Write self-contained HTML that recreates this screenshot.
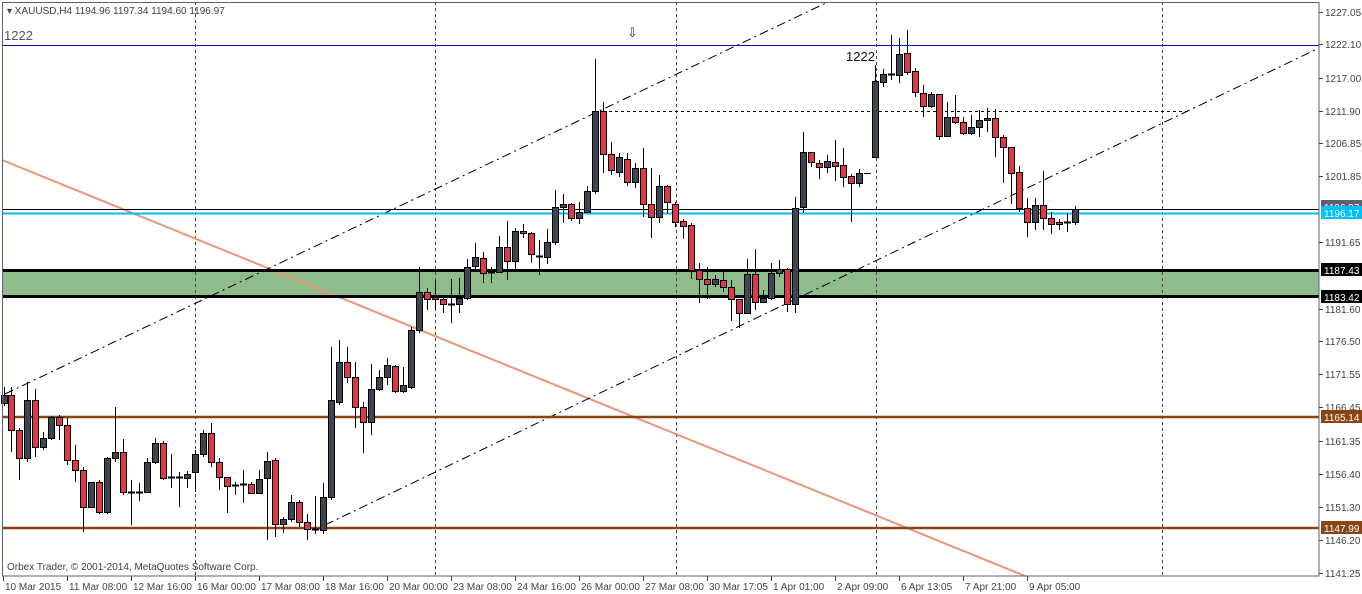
<!DOCTYPE html>
<html><head><meta charset="utf-8"><style>
html,body{margin:0;padding:0;background:#fff;}
body{width:1362px;height:594px;overflow:hidden;position:relative;font-family:"Liberation Sans",sans-serif;}
svg{position:absolute;left:0;top:0;}
</style></head><body>
<svg id="c" width="1362" height="594" xmlns="http://www.w3.org/2000/svg" font-family="Liberation Sans, sans-serif">
<rect x="0" y="0" width="1362" height="594" fill="#fff"/>
<rect x="2" y="270" width="1317" height="27" fill="#8fbc8b"/>
<g stroke="#444" stroke-width="1" stroke-dasharray="3,3">
<line x1="195.5" y1="2" x2="195.5" y2="576"/>
<line x1="435.5" y1="2" x2="435.5" y2="576"/>
<line x1="676.5" y1="2" x2="676.5" y2="576"/>
<line x1="876.5" y1="2" x2="876.5" y2="576"/>
<line x1="1162.5" y1="2" x2="1162.5" y2="576"/>
</g>
<line x1="2" y1="160" x2="1025" y2="576" stroke="#e9967a" stroke-width="2"/>
<g stroke="#000" stroke-width="1" stroke-dasharray="9,4,2,4">
<line x1="5" y1="394" x2="828" y2="2"/>
<line x1="325" y1="525" x2="1319" y2="48"/>
</g>
<line x1="603" y1="111.5" x2="1190" y2="111.5" stroke="#000" stroke-dasharray="3,3"/>
<line x1="2" y1="45.5" x2="1319" y2="45.5" stroke="#0000c8" stroke-width="1"/>
<line x1="2" y1="209.5" x2="1319" y2="209.5" stroke="#000" stroke-width="1"/>
<line x1="2" y1="213.5" x2="1319" y2="213.5" stroke="#00bfff" stroke-width="2"/>
<line x1="2" y1="270.5" x2="1319" y2="270.5" stroke="#000" stroke-width="3"/>
<line x1="2" y1="296.5" x2="1319" y2="296.5" stroke="#000" stroke-width="3"/>
<line x1="2" y1="417" x2="1319" y2="417" stroke="#8b4513" stroke-width="2.5"/>
<line x1="2" y1="528" x2="1319" y2="528" stroke="#8b4513" stroke-width="2.5"/>
<g id="candles"></g>
<text x="7" y="14" font-size="10" fill="#3a3f4a">▾ XAUUSD,H4  1194.96 1197.34 1194.60 1196.97</text>
<text x="4" y="40" font-size="13" fill="#555">1222</text>
<text x="846" y="61" font-size="13" fill="#111">1222</text>
<text x="627" y="37" font-size="13" fill="#333">⇩</text>
<text x="7" y="570" font-size="10" fill="#3a3f4a">Orbex Trader, © 2001-2014, MetaQuotes Software Corp.</text>
<rect x="2.5" y="2.5" width="1316.5" height="573.5" fill="none" stroke="#5a6270" stroke-width="1"/>
<g id="axis" font-size="10" fill="#3d4450"></g>
</svg>
<script>
var d="4,395,403,387,406,0;11,395,430,387,452,1;19,430,458,428,480,1;27,458,400,382,462,0;35,400,447,389,457,1;43,447,438,432,450,0;51,438,417,416,440,0;59,417,425,415,440,1;67,425,460,418,465,1;75,460,470,445,482,1;83,470,507,467,532,1;91,507,482,482,508,0;99,482,512,480,514,1;107,512,458,457,514,0;115,458,452,407,462,0;123,452,492,439,495,1;131,492,492,480,525,0;139,492,492,483,501,0;147,492,462,458,493,0;155,462,443,438,464,0;163,443,478,441,480,1;171,478,477,454,488,0;179,477,478,472,507,1;187,478,474,471,488,0;195,472,454,450,492,0;203,454,433,430,457,0;211,433,462,423,467,1;219,462,477,458,490,1;227,477,486,477,513,1;235,485,485,482,495,0;243,484,484,470,503,0;251,484,493,482,494,1;259,493,479,470,494,0;267,478,461,452,540,0;275,460,524,458,537,1;283,524,519,517,533,0;291,519,502,495,522,0;299,502,522,500,527,1;307,522,529,514,540,1;315,529,529,496,534,0;323,530,497,483,534,0;331,497,400,347,500,0;339,402,362,340,405,0;347,362,377,347,383,1;355,377,407,362,428,1;363,407,422,402,453,1;371,422,389,364,435,0;379,389,377,370,391,0;387,377,365,358,385,0;395,366,391,365,393,1;403,391,385,367,393,0;411,387,330,327,389,0;419,330,292,267,333,0;427,292,299,288,310,1;435,297,299,280,310,1;443,299,304,297,313,1;451,304,304,279,323,0;459,304,298,278,313,0;467,298,267,259,300,0;475,266,257,243,270,0;483,258,273,252,283,1;491,272,272,267,283,0;499,272,247,236,273,0;507,247,261,221,280,1;515,261,231,228,270,0;523,231,233,224,238,1;531,233,254,232,263,1;539,256,257,240,275,1;547,257,242,229,264,0;555,242,207,190,245,0;563,207,204,194,223,0;571,204,218,203,221,1;579,218,212,202,224,0;587,212,191,186,213,0;595,191,111,59,194,0;603,111,154,102,173,1;611,154,170,142,175,1;619,172,157,153,177,0;627,159,182,153,186,1;635,182,168,163,188,0;643,168,204,148,217,1;651,204,217,168,238,1;659,217,186,175,223,0;667,186,202,185,214,1;675,204,222,202,227,1;683,221,226,219,239,1;691,225,270,223,279,1;699,270,279,263,303,1;707,279,284,267,299,1;715,284,279,275,287,0;723,280,287,272,292,1;731,287,299,280,321,1;739,299,313,299,328,1;747,313,274,259,313,0;755,274,302,249,310,1;763,302,298,290,303,0;771,298,273,263,300,0;779,273,269,260,277,0;787,269,304,268,312,1;795,304,208,197,313,0;803,207,152,132,213,0;811,152,162,152,167,1;819,163,167,160,179,1;827,167,161,155,173,0;835,162,166,140,181,1;843,165,177,148,187,1;851,176,183,174,222,1;859,183,173,169,187,0;875,157,81,65,157,0;883,82,74,69,87,0;891,74,74,35,80,0;899,75,54,38,83,0;907,53,72,30,75,1;915,71,92,68,97,1;923,93,106,85,117,1;931,106,94,92,108,0;939,94,136,94,140,1;947,136,117,102,137,0;955,117,122,95,124,1;963,122,133,117,135,1;971,133,127,115,135,0;979,127,120,110,137,0;987,120,118,108,132,0;995,118,137,109,157,1;1003,137,147,135,183,1;1011,147,173,147,204,1;1019,172,208,166,212,1;1027,208,222,198,237,1;1035,222,205,198,230,0;1043,205,218,171,230,1;1051,218,224,212,234,1;1059,222,224,219,230,1;1067,222,222,213,232,0;1075,222,209,206,225,0";
var g=document.getElementById('candles'),s='';
d.split(';').forEach(function(r){var a=r.split(',').map(Number),x=a[0],o=a[1],c=a[2],h=a[3],l=a[4],red=a[5];
var t=Math.min(o,c),b=Math.max(o,c);
s+='<line x1="'+(x+.5)+'" y1="'+h+'" x2="'+(x+.5)+'" y2="'+l+'" stroke="#000" stroke-width="1"/>';
if(b-t<1.5){s+='<line x1="'+(x-3)+'" y1="'+(t+.5)+'" x2="'+(x+4)+'" y2="'+(t+.5)+'" stroke="#000" stroke-width="2"/>';}
else s+='<rect x="'+(x-2.5)+'" y="'+(t+.5)+'" width="6" height="'+(b-t)+'" fill="'+(red?'#f0323c':'#3c4654')+'" stroke="#000" stroke-width="1"/>';});
s+='<line x1="864" y1="173.5" x2="871" y2="173.5" stroke="#000"/>';
g.innerHTML=s;
var ax=document.getElementById('axis'),q='';
[["1227.05",12],["1222.10",44],["1217.00",78],["1211.90",111],["1206.85",143],["1201.85",176],["1191.65",242],["1181.60",309],["1176.50",341],["1171.55",374],["1166.45",407],["1161.35",441],["1156.40",474],["1151.30",507],["1146.20",540],["1141.25",573]].forEach(function(p){
q+='<line x1="1319" y1="'+p[1]+'.5" x2="1323" y2="'+p[1]+'.5" stroke="#3d4450"/><text x="1325" y="'+(p[1]+4)+'">'+p[0]+'</text>';});
[["1196.97",207,"#5a6270","#fff"],["1196.17",213,"#00bfff","#fff"],["1187.43",270,"#000","#fff"],["1183.42",297,"#000","#fff"],["1165.14",417,"#8b4513","#fff"],["1147.99",528,"#8b4513","#fff"]].forEach(function(p){
q+='<rect x="1321" y="'+(p[1]-7)+'" width="41" height="13" fill="'+p[2]+'"/><text x="1324" y="'+(p[1]+4)+'" fill="'+p[3]+'">'+p[0]+'</text>';});
[["10 Mar 2015",3],["11 Mar 08:00",67],["12 Mar 16:00",131],["16 Mar 00:00",195],["17 Mar 08:00",259],["18 Mar 16:00",323],["20 Mar 00:00",387],["23 Mar 08:00",451],["24 Mar 16:00",515],["26 Mar 00:00",579],["27 Mar 08:00",643],["30 Mar 17:05",707],["1 Apr 01:00",771],["2 Apr 09:00",835],["6 Apr 13:05",899],["7 Apr 21:00",963],["9 Apr 05:00",1027]].forEach(function(p){
q+='<line x1="'+(p[1]+.5)+'" y1="576" x2="'+(p[1]+.5)+'" y2="581" stroke="#3d4450"/><text x="'+(p[1]+2)+'" y="590">'+p[0]+'</text>';});
ax.innerHTML=q;
</script>
</body></html>
